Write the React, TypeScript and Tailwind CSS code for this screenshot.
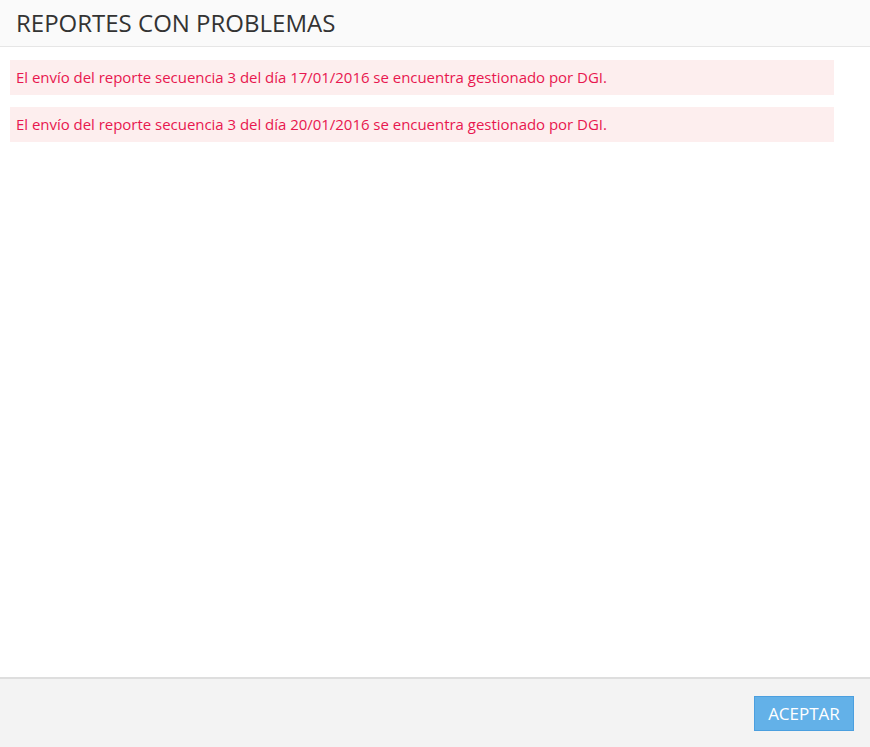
export default function App() {
  const items = [
    "El envío del reporte secuencia 3 del día 17/01/2016 se encuentra gestionado por DGI.",
    "El envío del reporte secuencia 3 del día 20/01/2016 se encuentra gestionado por DGI.",
  ];
  return (
    <div
      className="flex h-[747px] w-[870px] flex-col bg-white"
      style={{ fontFamily: '"Open Sans", "Noto Sans", sans-serif' }}
    >
      <div className="flex h-[47px] items-center border-b border-[#e6e6e6] bg-[#fafafa] pl-[16px]">
        <h1 className="text-[24px] font-normal leading-none text-[#333333]">
          REPORTES CON PROBLEMAS
        </h1>
      </div>
      <div className="flex flex-1 flex-col gap-[12px] pl-[10px] pr-[36px] pt-[13px]">
        {items.map((t) => (
          <div
            key={t}
            className="flex h-[35px] items-center bg-[#fdeeee] pl-[6px] text-[15px] tracking-[-0.03px] text-[#e8174f]"
          >
            {t}
          </div>
        ))}
      </div>
      <div className="flex h-[70px] items-start justify-end border-t-2 border-[#dedede] bg-[#f3f3f3] pr-[16px] pt-[17px]">
        <button className="h-[35px] w-[100px] border border-[#4b9fdf] bg-[#63b1e8] text-[17px] text-white">
          ACEPTAR
        </button>
      </div>
    </div>
  );
}
